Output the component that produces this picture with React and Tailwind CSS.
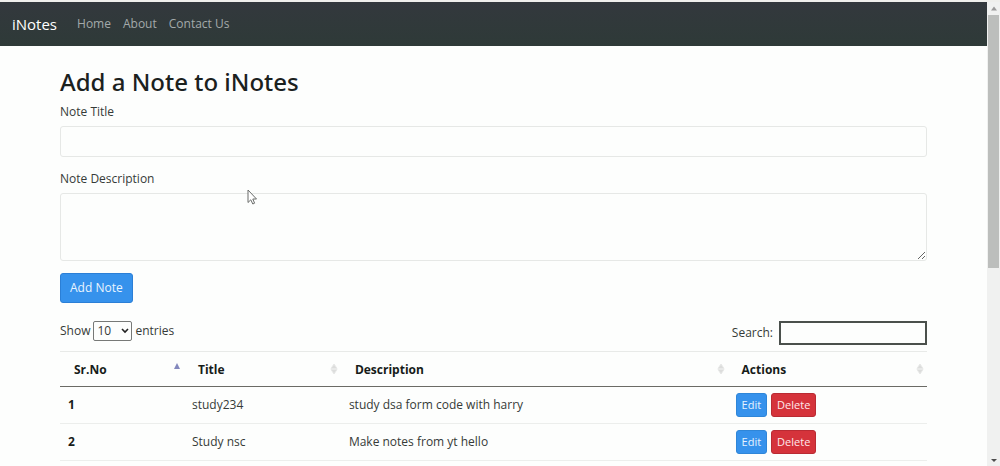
import React from "react";

const notes = [
  { id: 1, title: "study234", description: "study dsa form code with harry" },
  { id: 2, title: "Study nsc", description: "Make notes from yt hello" },
];

const columns = [
  { name: "Sr.No", sorted: true },
  { name: "Title" },
  { name: "Description" },
  { name: "Actions" },
];

function SortIcon({ sorted }) {
  return (
    <svg width="8" height="14" viewBox="0 0 8 14" className="shrink-0" aria-hidden="true">
      {sorted ? (
        <path d="M4 0L7 6H1Z" fill="#8388bd" />
      ) : (
        <path d="M4 1L7 5.5H1ZM1 6.5H7L4 11Z" fill="#dcdddc" stroke="#e8e9e8" />
      )}
    </svg>
  );
}

function Navbar() {
  return (
    <nav className="flex h-11 items-center bg-linear-to-b from-[#33383d] to-[#2e3a38] px-3">
      <a href="#" className="mr-5 text-[15px] text-white">iNotes</a>
      <div className="flex gap-3 text-[#a3a9aa]">
        <a href="#home">Home</a>
        <a href="#about">About</a>
        <a href="#contact">Contact Us</a>
      </div>
    </nav>
  );
}

function ScrollRail() {
  return (
    <div className="flex h-[464px] w-[13px] shrink-0 flex-col items-center bg-[#f0f1f0]" aria-hidden="true">
      <svg width="12" height="13" viewBox="0 0 12 13"><path d="M6 4.5L9 8.5H3Z" fill="#9a9a9a" /></svg>
      <div className="h-[253px] w-[11px] bg-[#bcbebc]" />
      <div className="grow" />
      <svg width="12" height="13" viewBox="0 0 12 13"><path d="M3 6H9L6 9Z" fill="#4d4d4d" /></svg>
    </div>
  );
}

function NoteForm() {
  return (
    <form className="flex flex-col items-start" onSubmit={(e) => e.preventDefault()}>
      <label htmlFor="title" className="mb-1 leading-5">Note Title</label>
      <input id="title" type="text" className="mb-3 h-[31px] w-full rounded-[3px] border border-[#e6e8e6] bg-[#fdfefd] px-2" />
      <label htmlFor="desc" className="mb-1 leading-5">Note Description</label>
      <textarea id="desc" className="mb-3 h-[68px] w-full rounded-[3px] border border-[#e6e8e6] bg-[#fdfefd] px-2" />
      <button type="submit" className="h-[30px] rounded-[3px] border border-[#2b7fd6] bg-[#3692ec] px-[9px] text-[#eaf5ff]">Add Note</button>
    </form>
  );
}

function NotesTable() {
  return (
    <table className="mt-1.5 w-full table-fixed border-collapse">
      <colgroup>
        <col className="w-[14.3%]" />
        <col className="w-[18.1%]" />
        <col className="w-[44.6%]" />
        <col className="w-[23%]" />
      </colgroup>
      <thead>
        <tr className="h-[35px] border-t border-b border-t-[#e8eae8] border-b-[#6b6b66] text-[#171c19]">
          {columns.map((c) => (
            <th key={c.name} className="pt-0.5 pr-[3px] pl-3.5 text-left font-bold">
              <div className="flex items-center justify-between">
                {c.name}
                <SortIcon sorted={c.sorted} />
              </div>
            </th>
          ))}
        </tr>
      </thead>
      <tbody>
        {notes.map((n) => (
          <tr key={n.id} className="h-[37px] border-b border-[#eceeec]">
            <th scope="row" className="px-2 text-left font-bold text-[#171c19]">{n.id}</th>
            <td className="px-2">{n.title}</td>
            <td className="px-2">{n.description}</td>
            <td className="px-2">
              <div className="flex gap-1 text-[11px]">
                <button type="button" className="h-6 rounded-[3px] border border-[#2f86d8] bg-[#3692ec] px-[5px] text-[#e6f3ff]">Edit</button>
                <button type="button" className="h-6 rounded-[3px] border border-[#b92b33] bg-[#d5333b] px-[5px] text-[#ffe9ea]">Delete</button>
              </div>
            </td>
          </tr>
        ))}
      </tbody>
    </table>
  );
}

export default function App() {
  return (
    <div className="border-y-2 border-[#efefec] bg-[#fdfefd] font-['Open_Sans','Noto_Sans',sans-serif] text-xs text-[#363b38]">
      <div className="flex">
        <div className="min-w-0 grow">
          <Navbar />
          <main className="px-[60px] pt-5">
            <h1 className="mb-1 font-['Noto_Sans',sans-serif] text-2xl leading-8 font-medium text-[#1b211e]">Add a Note to iNotes</h1>
            <NoteForm />
            <div className="mt-[18px] flex items-start justify-between">
              <label className="flex items-center gap-[3px]">
                Show
                <span className="relative">
                  <select defaultValue="10" className="block h-5 w-[39px] appearance-none rounded-[2px] border border-[#777977] bg-transparent pl-[3px] leading-4">
                    <option>10</option>
                    <option>25</option>
                    <option>50</option>
                    <option>100</option>
                  </select>
                  <svg width="8" height="6" viewBox="0 0 8 6" className="pointer-events-none absolute top-[7px] right-[3px]" aria-hidden="true">
                    <path d="M1 1L4 4L7 1" fill="none" stroke="#222" strokeWidth="1.6" />
                  </svg>
                </span>
                entries
              </label>
              <label className="flex items-center gap-1.5">
                Search:
                <input type="search" className="h-6 w-[148px] border-2 border-[#4a504c] bg-[#fdfefd] px-1" />
              </label>
            </div>
            <NotesTable />
          </main>
        </div>
        <ScrollRail />
      </div>
      <svg width="11" height="17" viewBox="0 0 11 17" className="pointer-events-none absolute top-[189px] left-[247px]" aria-hidden="true">
        <path d="M1 1V13.5L3.8 10.8L5.8 15L7.6 14.2L5.8 10H9.5Z" fill="#fff" stroke="#6a6d6b" />
      </svg>
    </div>
  );
}
